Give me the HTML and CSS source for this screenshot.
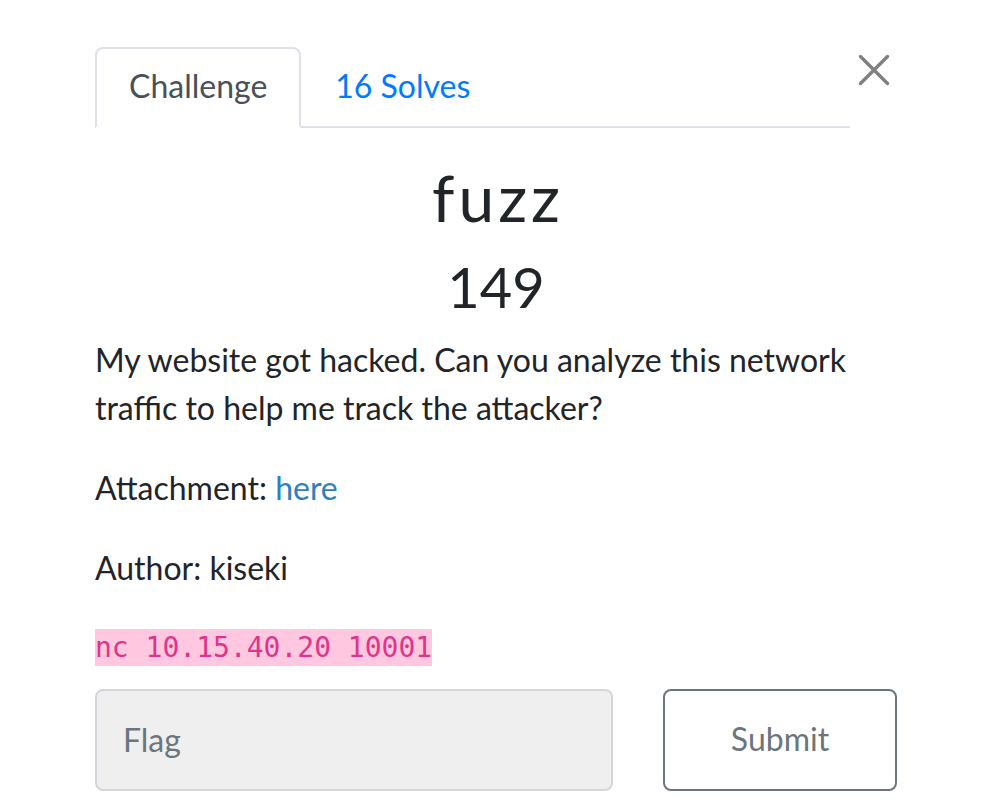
FILE: index.html
```html
<!DOCTYPE html>
<html lang="en">
<head>
<meta charset="utf-8">
<title>fuzz</title>
<link rel="stylesheet" href="styles.css">
</head>
<body>
<div class="modal">
  <div class="header-row">
    <nav class="tabs">
      <span class="tab active">Challenge</span>
      <span class="tab link">16 Solves</span>
    </nav>
    <button class="close" type="button" aria-label="Close">
      <svg width="32" height="32" viewBox="0 0 32 32"><path d="M2.5 2.5 L29.5 29.5 M29.5 2.5 L2.5 29.5" stroke="#808080" stroke-width="3.4" stroke-linecap="round" fill="none"/></svg>
    </button>
  </div>
  <h2 class="name">fuzz</h2>
  <h3 class="value">149</h3>
  <div class="desc">
    <p>My website got hacked. Can you analyze this network traffic to help me track the attacker?</p>
    <p>Attachment: <a class="here" href="#">here</a></p>
    <p>Author: kiseki</p>
    <p class="code-line"><code>nc 10.15.40.20 10001</code></p>
  </div>
  <form class="submit-row">
    <input class="flag" type="text" placeholder="Flag">
    <button class="submit" type="button">Submit</button>
  </form>
</div>
</body>
</html>
```
FILE: styles.css
```css
html, body {
  margin: 0;
  padding: 0;
  background: #ffffff;
}
body {
  font-family: Lato, "Open Sans", "Liberation Sans", sans-serif;
  color: #212529;
}
.modal {
  width: 802px;
  padding: 47px 0 0 95px;
}
.header-row {
  display: flex;
  align-items: flex-start;
}
.tabs {
  flex: 1;
  display: flex;
  border-bottom: 2px solid #dee2e6;
}
.tab {
  display: block;
  font-size: 32px;
  line-height: 48px;
  padding: 13px 32px 16px;
  border: 2px solid transparent;
  border-top-left-radius: 8px;
  border-top-right-radius: 8px;
  margin-bottom: -2px;
}
.tab.active {
  color: #495057;
  border-color: #dee2e6 #dee2e6 #ffffff;
  background: #ffffff;
}
.tab.link {
  color: #007bff;
}
.close {
  width: 47px;
  height: 40px;
  padding: 7px 0 0 8px;
  margin: 0;
  border: 0;
  background: transparent;
  display: flex;
  align-items: flex-start;
  justify-content: flex-start;
}
.close svg {
  display: block;
}
.name {
  margin: 0 0 16px;
  padding-top: 32px;
  padding-left: 4px;
  text-align: center;
  font-size: 64px;
  line-height: 1.2;
  font-weight: 400;
  letter-spacing: 4px;
}
.value {
  margin: 0 0 16px;
  text-align: center;
  font-size: 56px;
  line-height: 1.2;
  font-weight: 400;
}
.desc p {
  margin: 0 0 32px;
  font-size: 32px;
  line-height: 48px;
  width: 760px;
}
.here {
  color: #2d7fbe;
  text-decoration: none;
}
.desc p.code-line {
  margin-bottom: 17px;
}
code {
  display: inline-block;
  font-family: "DejaVu Sans Mono", "Liberation Mono", monospace;
  font-size: 28px;
  line-height: 37px;
  color: #e0348a;
  background: #ffc8e0;
  vertical-align: 3px;
}
.submit-row {
  display: grid;
  grid-template-columns: 518px 234px;
  column-gap: 50px;
  margin: 0;
}
.flag {
  box-sizing: border-box;
  height: 102px;
  width: 518px;
  margin: 0;
  padding: 0 26px;
  font-family: Lato, "Open Sans", sans-serif;
  font-size: 32px;
  color: #495057;
  background: #efefef;
  border: 2px solid #d3d6da;
  border-radius: 8px;
  outline: none;
}
.flag::placeholder {
  color: #6c757d;
  opacity: 1;
}
.submit {
  box-sizing: border-box;
  height: 102px;
  margin: 0;
  font-family: Lato, "Open Sans", sans-serif;
  font-size: 32px;
  color: #6c757d;
  background: #ffffff;
  border: 2px solid #6c757d;
  border-radius: 8px;
  padding: 0 0 2px;
}
```
